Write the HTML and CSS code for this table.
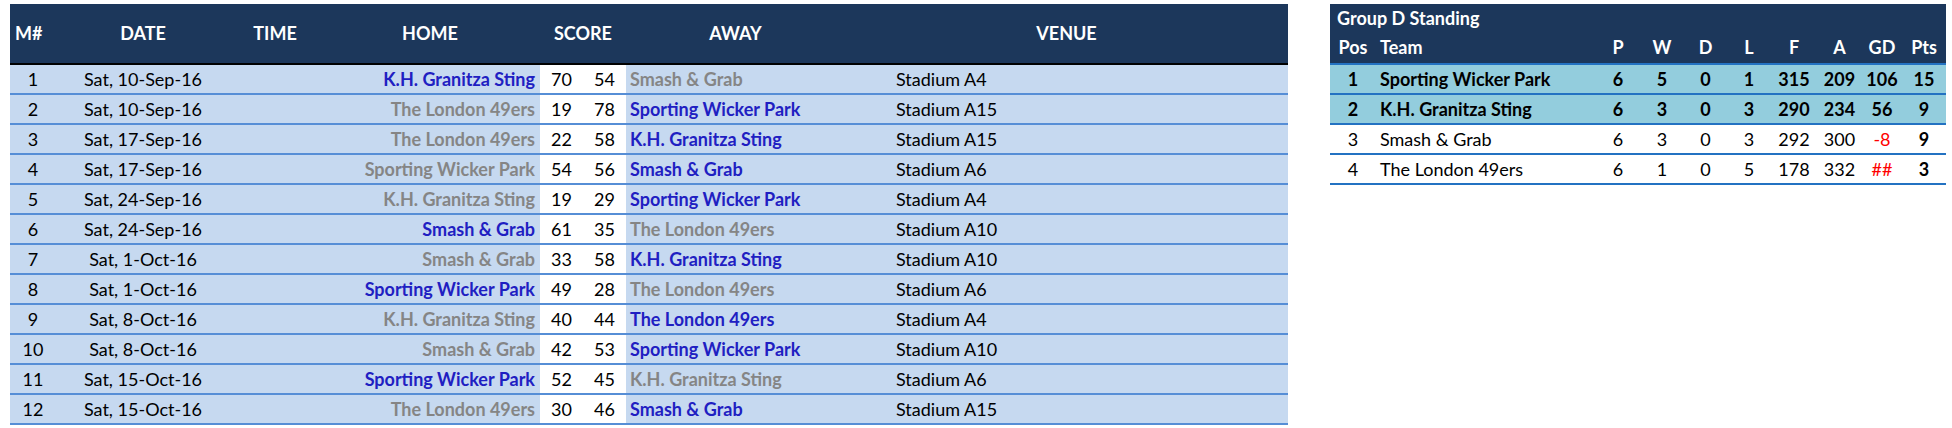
FILE: index.html
```html
<!DOCTYPE html>
<html lang="en">
<head>
<meta charset="utf-8">
<title>Group D Fixtures</title>
<link rel="stylesheet" href="styles.css">
</head>
<body>
<div class="page">
  <div class="fixtures">
    <div class="fx-head">
      <div class="c-num hleft">M#</div>
      <div>DATE</div>
      <div>TIME</div>
      <div>HOME</div>
      <div class="span2">SCORE</div>
      <div>AWAY</div>
      <div>VENUE</div>
    </div>
    <div class="fx-row"><div class="c-num">1</div><div class="c-date">Sat, 10-Sep-16</div><div></div><div class="c-home win">K.H. Granitza Sting</div><div class="c-sc">70</div><div class="c-sc">54</div><div class="c-away lose">Smash &amp; Grab</div><div class="c-venue">Stadium A4</div></div>
    <div class="fx-row"><div class="c-num">2</div><div class="c-date">Sat, 10-Sep-16</div><div></div><div class="c-home lose">The London 49ers</div><div class="c-sc">19</div><div class="c-sc">78</div><div class="c-away win">Sporting Wicker Park</div><div class="c-venue">Stadium A15</div></div>
    <div class="fx-row"><div class="c-num">3</div><div class="c-date">Sat, 17-Sep-16</div><div></div><div class="c-home lose">The London 49ers</div><div class="c-sc">22</div><div class="c-sc">58</div><div class="c-away win">K.H. Granitza Sting</div><div class="c-venue">Stadium A15</div></div>
    <div class="fx-row"><div class="c-num">4</div><div class="c-date">Sat, 17-Sep-16</div><div></div><div class="c-home lose">Sporting Wicker Park</div><div class="c-sc">54</div><div class="c-sc">56</div><div class="c-away win">Smash &amp; Grab</div><div class="c-venue">Stadium A6</div></div>
    <div class="fx-row"><div class="c-num">5</div><div class="c-date">Sat, 24-Sep-16</div><div></div><div class="c-home lose">K.H. Granitza Sting</div><div class="c-sc">19</div><div class="c-sc">29</div><div class="c-away win">Sporting Wicker Park</div><div class="c-venue">Stadium A4</div></div>
    <div class="fx-row"><div class="c-num">6</div><div class="c-date">Sat, 24-Sep-16</div><div></div><div class="c-home win">Smash &amp; Grab</div><div class="c-sc">61</div><div class="c-sc">35</div><div class="c-away lose">The London 49ers</div><div class="c-venue">Stadium A10</div></div>
    <div class="fx-row"><div class="c-num">7</div><div class="c-date">Sat, 1-Oct-16</div><div></div><div class="c-home lose">Smash &amp; Grab</div><div class="c-sc">33</div><div class="c-sc">58</div><div class="c-away win">K.H. Granitza Sting</div><div class="c-venue">Stadium A10</div></div>
    <div class="fx-row"><div class="c-num">8</div><div class="c-date">Sat, 1-Oct-16</div><div></div><div class="c-home win">Sporting Wicker Park</div><div class="c-sc">49</div><div class="c-sc">28</div><div class="c-away lose">The London 49ers</div><div class="c-venue">Stadium A6</div></div>
    <div class="fx-row"><div class="c-num">9</div><div class="c-date">Sat, 8-Oct-16</div><div></div><div class="c-home lose">K.H. Granitza Sting</div><div class="c-sc">40</div><div class="c-sc">44</div><div class="c-away win">The London 49ers</div><div class="c-venue">Stadium A4</div></div>
    <div class="fx-row"><div class="c-num">10</div><div class="c-date">Sat, 8-Oct-16</div><div></div><div class="c-home lose">Smash &amp; Grab</div><div class="c-sc">42</div><div class="c-sc">53</div><div class="c-away win">Sporting Wicker Park</div><div class="c-venue">Stadium A10</div></div>
    <div class="fx-row"><div class="c-num">11</div><div class="c-date">Sat, 15-Oct-16</div><div></div><div class="c-home win">Sporting Wicker Park</div><div class="c-sc">52</div><div class="c-sc">45</div><div class="c-away lose">K.H. Granitza Sting</div><div class="c-venue">Stadium A6</div></div>
    <div class="fx-row"><div class="c-num">12</div><div class="c-date">Sat, 15-Oct-16</div><div></div><div class="c-home lose">The London 49ers</div><div class="c-sc">30</div><div class="c-sc">46</div><div class="c-away win">Smash &amp; Grab</div><div class="c-venue">Stadium A15</div></div>
  </div>

  <div class="standing">
    <div class="st-title">Group D Standing</div>
    <div class="st-head">
      <div>Pos</div><div class="left">Team</div><div>P</div><div>W</div><div>D</div><div>L</div><div>F</div><div>A</div><div>GD</div><div>Pts</div>
    </div>
    <div class="st-row top bold"><div>1</div><div class="left">Sporting Wicker Park</div><div>6</div><div>5</div><div>0</div><div>1</div><div>315</div><div>209</div><div>106</div><div>15</div></div>
    <div class="st-row top bold"><div>2</div><div class="left">K.H. Granitza Sting</div><div>6</div><div>3</div><div>0</div><div>3</div><div>290</div><div>234</div><div>56</div><div>9</div></div>
    <div class="st-row"><div>3</div><div class="left">Smash &amp; Grab</div><div>6</div><div>3</div><div>0</div><div>3</div><div>292</div><div>300</div><div class="neg">-8</div><div class="pts">9</div></div>
    <div class="st-row"><div>4</div><div class="left">The London 49ers</div><div>6</div><div>1</div><div>0</div><div>5</div><div>178</div><div>332</div><div class="neg">##</div><div class="pts">3</div></div>
  </div>
</div>
</body>
</html>
```

FILE: styles.css
```css
html, body {
  margin: 0;
  padding: 0;
  background: #ffffff;
}

body {
  font-family: Lato, "Open Sans", "Liberation Sans", sans-serif;
  font-size: 18px;
  color: #000000;
}

.page {
  display: flex;
  align-items: flex-start;
  gap: 42px;
  padding: 4px 0 0 10px;
}

/* ---------- fixtures ---------- */
.fixtures {
  width: 1278px;
}

.fx-head,
.fx-row {
  display: grid;
  grid-template-columns: 46px 174px 90px 220px 43px 43px 219px 443px;
}

.fx-head {
  height: 59px;
  line-height: 59px;
  background: #1c375b;
  color: #ffffff;
  font-weight: 700;
  text-align: center;
  border-bottom: 2px solid #000000;
}

.fx-head .hleft {
  text-align: left;
  padding-left: 5px;
}

.fx-head .span2 {
  grid-column: span 2;
}

.fx-row {
  height: 28px;
  line-height: 28px;
  background: #c6d9f0;
  border-bottom: 2px solid #568ed6;
  white-space: nowrap;
}

.c-num {
  text-align: center;
}

.c-date {
  text-align: center;
}

.c-home {
  text-align: right;
  padding-right: 5px;
  font-weight: 700;
}

.c-away {
  text-align: left;
  padding-left: 4px;
  font-weight: 700;
}

.c-sc {
  background: #ffffff;
  text-align: center;
}

.c-venue {
  padding-left: 51px;
}

.win {
  color: #1f20c2;
}

.lose {
  color: #858585;
}

/* ---------- standing ---------- */
.standing {
  width: 616px;
}

.st-title {
  height: 29px;
  line-height: 29px;
  background: #1c375b;
  color: #ffffff;
  font-weight: 700;
  padding-left: 7px;
}

.st-head,
.st-row {
  display: grid;
  grid-template-columns: 46px 220px 44px 44px 43px 44px 46px 45px 40px 44px;
  text-align: center;
  white-space: nowrap;
}

.st-head {
  height: 30px;
  line-height: 28px;
  background: #1c375b;
  color: #ffffff;
  font-weight: 700;
  border-bottom: 2px solid #2372c2;
}

.st-row {
  height: 28px;
  line-height: 28px;
  border-bottom: 2px solid #2372c2;
}

.st-head .left,
.st-row .left {
  text-align: left;
  padding-left: 4px;
}

.st-row.top {
  background: #93cddd;
}

.bold {
  font-weight: 700;
}

.neg {
  color: #ff0000;
}

.pts {
  font-weight: 700;
}
```
